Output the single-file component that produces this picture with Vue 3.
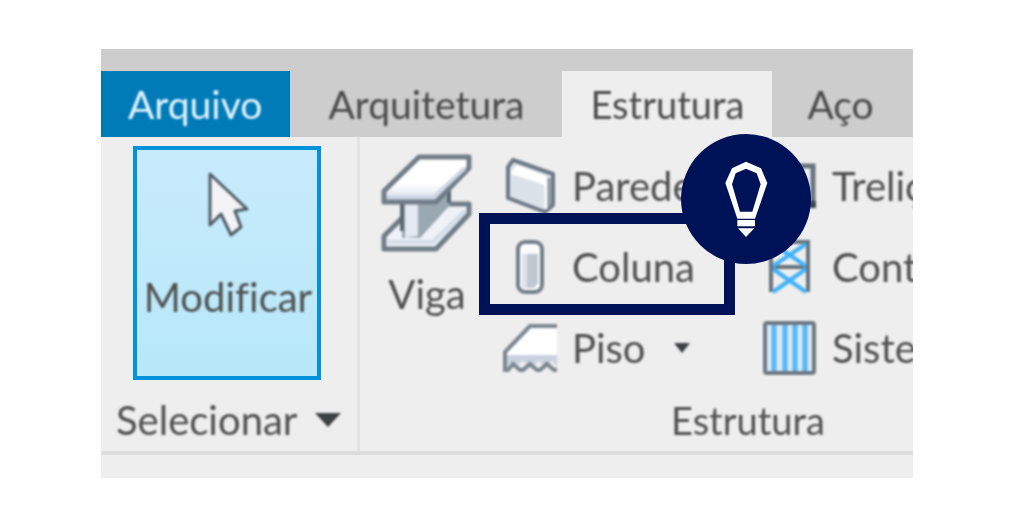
<script setup>
const tabs = [
  { name: 'Arquivo', kind: 'file' },
  { name: 'Arquitetura', kind: '' },
  { name: 'Estrutura', kind: 'active' },
  { name: 'Aço', kind: 'last' }
]
</script>

<template>
  <main class="ribbon">
    <nav class="tabs" aria-label="Guias">
      <button v-for="tab in tabs" :key="tab.name" type="button" class="tab" :class="tab.kind">
        <span class="label">{{ tab.name }}</span>
      </button>
    </nav>

    <div class="panels">
      <section class="panel select-panel">
        <div class="panel-body">
          <button type="button" class="modify">
            <svg class="icon" width="42" height="68" viewBox="0 0 42 68" aria-hidden="true">
              <path d="M3 3 L3 54 L14 43 L24 64 L34 56 L28 40 L40 38 Z" fill="#f3f2f5" stroke="#525e69" stroke-width="3" stroke-linejoin="round" />
            </svg>
            <span class="label">Modificar</span>
          </button>
        </div>
        <button type="button" class="panel-title dropdown">
          <span class="label">Selecionar</span>
          <svg class="icon" width="26" height="14" viewBox="0 0 26 14" aria-hidden="true">
            <path d="M0 0 H26 L13 14 Z" fill="#3c4144" />
          </svg>
        </button>
      </section>

      <section class="panel structure-panel">
        <div class="panel-body">
          <button type="button" class="beam">
            <svg class="icon" width="92" height="98" viewBox="0 0 92 98" aria-hidden="true">
              <defs>
                <linearGradient id="flange" x1="0" y1="0" x2="0" y2="1">
                  <stop offset="0.6" stop-color="#ffffff" />
                  <stop offset="1" stop-color="#d5dee9" />
                </linearGradient>
              </defs>
              <path d="M3 82 L35 50 H88 V60 L55 95 H3 Z" fill="#eef2f7" stroke="#707c87" stroke-width="5" stroke-linejoin="round" />
              <path d="M5 88 H52 L84 57" fill="none" stroke="#d5dde8" stroke-width="4" />
              <path d="M21 41 H46 L69 26 V51 L39 84 H21 Z" fill="#99a8b1" />
              <path d="M21 41 V77 M68 30 V49" fill="none" stroke="#596874" stroke-width="4" />
              <path d="M24 42 H37 V82 L24 84 Z" fill="#e3e8f2" />
              <path d="M3 37 L38 3 H88 V14 L55 48 H3 Z" fill="url(#flange)" stroke="#707c87" stroke-width="5" stroke-linejoin="round" />
              <path d="M6 43 H53 L84 14" fill="none" stroke="#ccd7e5" stroke-width="4" />
            </svg>
            <span class="label">Viga</span>
          </button>

          <div class="tools">
            <button type="button" class="tool">
              <svg class="icon" width="54" height="58" viewBox="0 0 54 58" aria-hidden="true">
                <path d="M5 10 L10 3 L50 17 V48 L42 55 L5 41 Z" fill="#dce2e9" stroke="#6c7985" stroke-width="4" stroke-linejoin="round" />
                <path d="M8 15 L14 8 L43 19 L42 28 L8 17 Z" fill="#ffffff" />
                <path d="M43 20 V52" stroke="#ffffff" stroke-width="3" />
                <path d="M46 21 V50" stroke="#8994a0" stroke-width="3" />
              </svg>
              <span class="label">Parede</span>
            </button>
            <div class="highlight">
              <button type="button" class="tool">
                <svg class="icon" width="54" height="54" viewBox="0 0 54 54" aria-hidden="true">
                  <rect x="15" y="2" width="24" height="50" rx="7" fill="#ffffff" stroke="#727e89" stroke-width="4" />
                  <path d="M19 14 H24 V48 H19 Z" fill="#dde3eb" />
                  <path d="M24 14 H35 V43 L31 48 H24 Z" fill="#bdc8d1" />
                  <path d="M19 9 Q27 3 35 9 V14 H19 Z" fill="#f8fafc" />
                </svg>
                <span class="label">Coluna</span>
              </button>
              <svg class="hint" viewBox="0 0 390 390" role="img" aria-label="Dica">
                <circle cx="195" cy="195" r="195" fill="#001257" />
                <path fill="#ffffff" fill-rule="evenodd" d="M195 83 L240 103 L259 147 L222 254 H169 L133 147 L153 103 Z M195 104 L164 118 L153 151 L177 233 H214 L239 151 L227 118 Z" />
                <path fill="#ffffff" d="M169 258 H222 V277 H169 Z M171 283 H220 L195 309 Z" />
              </svg>
            </div>
            <button type="button" class="tool">
              <svg class="icon" width="54" height="50" viewBox="0 0 54 50" aria-hidden="true">
                <path d="M2 28 L27 3 H54 V44 L50 38 L44 46 L36 38 L29 46 L20 38 L13 46 L9 40 L5 46 H2 Z" fill="#ffffff" />
                <path d="M3 32 H54 V44 L49 38 L43 45 L36 38 L28 45 L20 38 L12 45 L8 40 L3 46 Z" fill="#cbd2df" />
                <path d="M54 3 H27 L2 29 V47 H5 L10 41 L17 47 H20 L27 41 L34 47 H37 L44 41 L51 47 H54" fill="none" stroke="#7b8791" stroke-width="4" />
              </svg>
              <span class="label">Piso</span>
              <svg class="icon more" width="16" height="10" viewBox="0 0 16 10" aria-hidden="true">
                <path d="M0 0 H16 L8 10 Z" fill="#3c4144" />
              </svg>
            </button>
          </div>

          <div class="tools">
            <button type="button" class="tool">
              <svg class="icon" width="54" height="46" viewBox="0 0 54 46" aria-hidden="true">
                <path d="M2 3 H50 V42 H2 Z" fill="#eef1f5" stroke="#68737e" stroke-width="5" />
                <path d="M46 38 H53 V45 H46 Z" fill="#3a454f" />
              </svg>
              <span class="label">Treliça</span>
            </button>
            <button type="button" class="tool">
              <svg class="icon" width="54" height="54" viewBox="0 0 54 54" aria-hidden="true">
                <path d="M8 2 H45 V52 M8 2 V52 M8 27 H45" fill="none" stroke="#68737b" stroke-width="4" />
                <path d="M10 4 L43 26 M43 4 L10 26 M10 29 L43 52 M43 29 L10 52" stroke="#3fb2fc" stroke-width="4" />
              </svg>
              <span class="label">Contraventamento</span>
            </button>
            <button type="button" class="tool">
              <svg class="icon" width="54" height="54" viewBox="0 0 54 54" aria-hidden="true">
                <rect x="2" y="2" width="49" height="50" rx="2" fill="#dce9f4" stroke="#6d7882" stroke-width="4" />
                <path d="M11 4 V50 M22 4 V50 M32 4 V50 M42 4 V50" stroke="#53b7fa" stroke-width="5" />
              </svg>
              <span class="label">Sistema</span>
            </button>
          </div>
        </div>
        <h2 class="panel-title centered"><span class="label">Estrutura</span></h2>
      </section>
    </div>
  </main>
</template>

<style>
body {
  background: #fefefe;
}
</style>

<style scoped>
.ribbon {
  margin: 49px 111px 0 101px;
  padding-bottom: 23px;
  overflow: hidden;
  background: #eeeeee;
  color: #505050;
  font-family: Lato, "Open Sans", sans-serif;
  font-size: 40px;
  line-height: 48px;
  font-variant-ligatures: none;
}

button {
  margin: 0;
  padding: 0;
  border: 0;
  background: none;
  color: inherit;
  font: inherit;
  font-variant-ligatures: none;
  text-align: left;
}

.label,
.icon {
  filter: blur(1px);
}

.label {
  white-space: nowrap;
}

.icon {
  display: block;
  flex: none;
}

.tabs {
  display: flex;
  padding-top: 22px;
  background: #cdcdcd;
}

.tab {
  flex: none;
  height: 66px;
  padding: 0 38px;
  color: #4a4a4a;
  font-size: 39px;
}

.tab.file {
  padding: 0 28px 0 27px;
  background: #007bb8;
  color: #e4f4fc;
}

.tab.active {
  padding: 0 28px;
  background: #eeeeee;
  font-size: 38px;
}

.tab.last {
  padding-left: 35px;
}

.panels {
  display: flex;
  border-bottom: 4px solid #dddddd;
}

.panel-body {
  display: flex;
  height: 243px;
  padding-top: 8px;
}

.select-panel {
  flex: none;
  width: 256px;
  border-right: 3px solid #e3e3e3;
}

.modify {
  display: flex;
  flex-direction: column;
  align-items: center;
  gap: 34px;
  width: 188px;
  height: 234px;
  margin: 1px 0 0 32px;
  padding: 21px 0 0 2px;
  border: 4px solid #0093dc;
  background: linear-gradient(#c8ebfc, #b7e8f8);
}

.panel-title {
  display: flex;
  align-items: center;
  height: 63px;
  margin: 0;
}

.dropdown {
  gap: 18px;
  padding-left: 15px;
}

.centered {
  justify-content: center;
  font-size: 38px;
  font-weight: 400;
}

.structure-panel {
  flex: none;
  width: 776px;
}

.beam {
  display: flex;
  flex: none;
  flex-direction: column;
  align-items: center;
  gap: 18px;
  width: 134px;
  height: 192px;
  margin-right: 9px;
  padding-top: 9px;
}

.tools {
  flex: none;
  width: 260px;
}

.tool {
  display: flex;
  align-items: center;
  gap: 15px;
  height: 81px;
}

.more {
  margin-left: 13px;
}

.highlight {
  position: relative;
}

.highlight::after {
  content: "";
  position: absolute;
  z-index: 1;
  top: -13px;
  left: -24px;
  box-sizing: border-box;
  width: 256px;
  height: 102px;
  border: 11px solid #001257;
}

.hint {
  position: absolute;
  z-index: 2;
  top: -92px;
  left: 178px;
  width: 130px;
  height: 130px;
}
</style>
